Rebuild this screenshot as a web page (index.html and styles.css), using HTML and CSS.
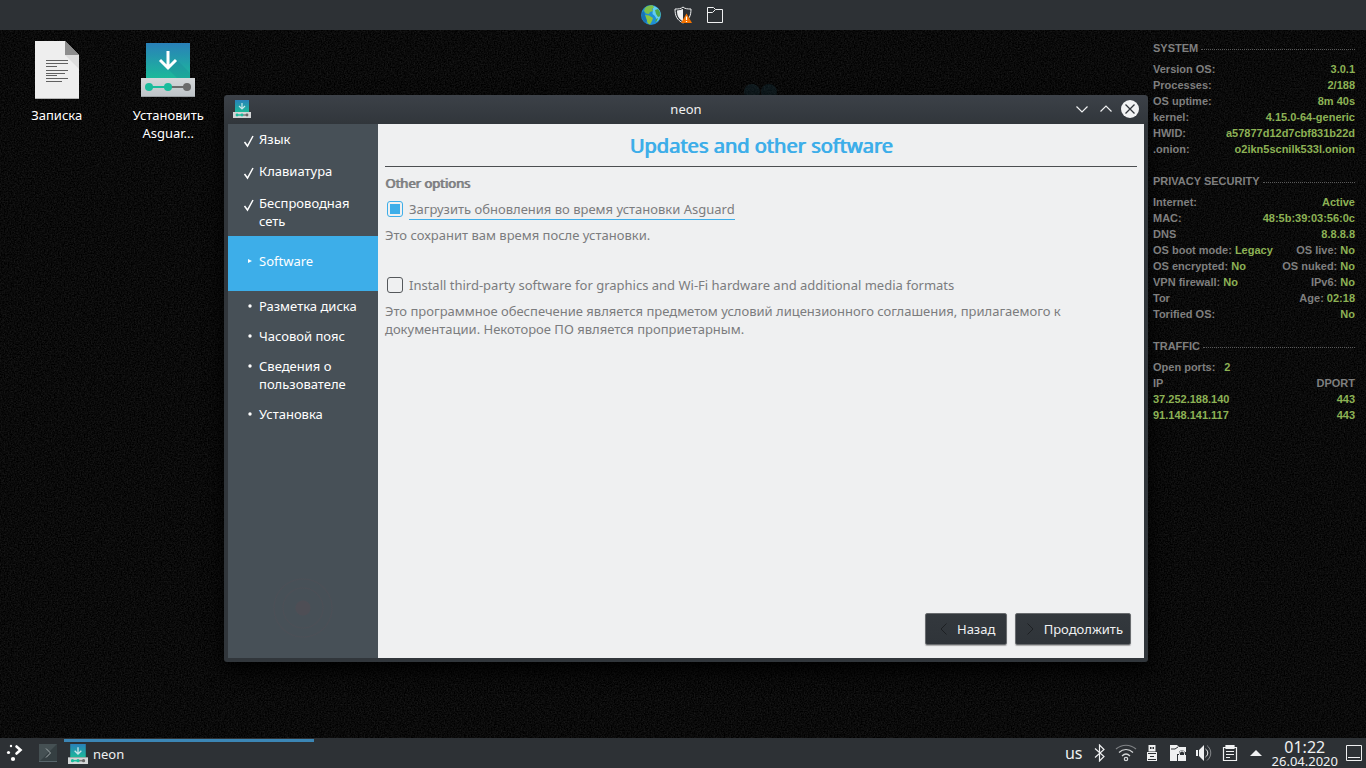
FILE: index.html
```html
<!DOCTYPE html>
<html lang="ru">
<head>
<meta charset="utf-8">
<meta name="viewport" content="width=device-width, initial-scale=1">
<title>neon</title>
<link rel="stylesheet" href="styles.css">
</head>
<body>
<svg class="wallpaper" aria-hidden="true">
  <defs>
    <filter id="grain" x="0" y="0" width="100%" height="100%" color-interpolation-filters="sRGB">
      <feTurbulence type="fractalNoise" baseFrequency="0.7" numOctaves="2" seed="4"/>
      <feColorMatrix type="matrix" values="0.16 0 0 0 -0.04  0.16 0 0 0 -0.04  0.16 0 0 0 -0.04  0 0 0 0 1"/>
    </filter>
    <linearGradient id="teal" x1="0" y1="0" x2="0" y2="1"><stop offset="0" stop-color="#2980b9"/><stop offset="1" stop-color="#1cb99a"/></linearGradient>
    <linearGradient id="metal" x1="0" y1="0" x2="0" y2="1"><stop offset="0" stop-color="#d5d8da"/><stop offset="1" stop-color="#bdc3c7"/></linearGradient>
    <symbol id="installer" viewBox="0 0 54 54">
      <path fill="url(#teal)" d="M5 0h44v35H5z"/>
      <path fill="#1a7d92" opacity=".25" d="M36 17l13 13v5H36l-9-9z"/>
      <path d="M27 8v17M19 17l8 8 8-8" fill="none" stroke="#fff" stroke-width="3"/>
      <path fill="url(#metal)" d="M0 35h54v19H0z"/>
      <path fill="#9a9fa2" d="M0 53h54v1H0z"/>
      <path d="M27 44h18" stroke="#6b6b6b" stroke-width="2"/>
      <path d="M8 44h19" stroke="#1abc9c" stroke-width="2"/>
      <circle cx="8" cy="44" r="4" fill="#1abc9c"/><circle cx="27" cy="44" r="4" fill="#1abc9c"/><circle cx="46" cy="44" r="4" fill="#6b6b6b"/>
    </symbol>
    <symbol id="installer-small" viewBox="0 0 18 18">
      <path fill="url(#teal)" d="M2 0h14v12H2z"/>
      <path d="M9 3v6M6 6l3 3 3-3" fill="none" stroke="#c9e5ea" stroke-width="1.2"/>
      <path fill="#d3d6d7" d="M0 12h18v6H0z"/>
      <path d="M9 15h6" stroke="#777" stroke-width="1.4"/>
      <path d="M3 15h6" stroke="#1abc9c" stroke-width="1.4"/>
      <circle cx="4" cy="15" r="1.4" fill="#1abc9c"/><circle cx="9" cy="15" r="1.4" fill="#1abc9c"/><circle cx="14" cy="15" r="1.4" fill="#666"/>
    </symbol>
  </defs>
  <rect width="100%" height="100%" filter="url(#grain)"/>
  <g fill="#1b3a46" opacity=".35"><circle cx="752" cy="92" r="8"/><circle cx="769" cy="92" r="8"/></g>
</svg>

<header class="top-panel">
  <button class="icon-button" aria-label="Браузер">
    <svg width="20" height="20" viewBox="0 0 20 20"><circle cx="10" cy="10" r="10" fill="#1f8fd6"/><path fill="#63cdf0" d="M12 1c5 1 8 5 7.500 9-.5 4-2 6-4 7 0-4-1-6-4-8z"/><path fill="#7fc04a" d="M4 3c2-2 5-3 8-2.500l1 2-2 1.500 1 2-3 1-1 2-3-.5L3 6z"/><path fill="#8cc63f" d="M4 10l4 .5 4 2.500-1 3-2 3.500c-2-.5-3-2-3-4z"/><path fill="#4ea84a" d="M14 5l3-1 2 3 .5 4-2.500 1-2-3zM15 14l2-1-1 3-2 1z"/><path fill="#14609f" opacity=".6" d="M.5 8L3 6l1 4 2 6-1 2C1.500 16 0 12 .5 8z"/></svg>
  </button>
  <button class="icon-button" aria-label="Безопасность">
    <svg width="20" height="20" viewBox="0 0 20 20"><path d="M10 2c-2 2-5 2-8 2 0 7 2 11 8 14 6-3 8-7 8-14-3 0-6 0-8-2z" fill="#2c3034" stroke="#eff0f1" stroke-width="1"/><path fill="#eff0f1" d="M10 4c-2 1-4 1-6 1.500 0 6 2 8.500 6 11z"/><path fill="#f67400" d="M13.500 8.500L19 18H8z"/><path d="M13.500 11.500v3.500M13.500 16v1" stroke="#fff" stroke-width="1.200"/></svg>
  </button>
  <button class="icon-button" aria-label="Файлы">
    <svg width="20" height="20" viewBox="0 0 20 20" fill="none" stroke="#eff0f1"><path d="M2.500 17.500v-15h6l2 2h7v13z"/><path d="M2.500 7.500h5l3-3" /></svg>
  </button>
</header>

<div class="desktop">
  <nav class="shortcuts" aria-label="Рабочий стол">
    <a class="shortcut" href="#note">
      <svg width="60" height="60" viewBox="0 0 60 60"><path fill="#eeeeee" d="M8 1h30l14 14v44H8z"/><path fill="#dddddd" d="M38 15h14v14z"/><path fill="#8d8d8d" d="M38 1l14 14H38z"/><path fill="#b5b5b5" d="M8 58h44v1H8z"/><path stroke="#606060" d="M19 20.500h22M19 23.500h22M19 26.500h11M19 30.500h22M19 33.500h19M19 35.500h11M19 38.500h22M19 41.500h16"/></svg>
      <span>Записка</span>
    </a>
    <a class="shortcut" href="#install">
      <svg width="60" height="60" viewBox="0 0 60 60"><use href="#installer" x="3" y="3" width="54" height="54"/></svg>
      <span>Установить Asguar...</span>
    </a>
  </nav>

  <main class="window">
    <div class="titlebar">
      <svg width="18" height="18"><use href="#installer-small"/></svg>
      <span class="title">neon</span>
      <div class="window-buttons">
        <button class="icon-button" aria-label="Свернуть"><svg width="18" height="18" viewBox="0 0 18 18" fill="none" stroke="#eff0f1" stroke-width="1.200"><path d="M3.500 6.500L9 12l5.500-5.500"/></svg></button>
        <button class="icon-button" aria-label="Развернуть"><svg width="18" height="18" viewBox="0 0 18 18" fill="none" stroke="#eff0f1" stroke-width="1.200"><path d="M3.500 11.500L9 6l5.500 5.500"/></svg></button>
        <button class="icon-button" aria-label="Закрыть"><svg width="18" height="18" viewBox="0 0 18 18"><circle cx="9" cy="9" r="9" fill="#f1f2f3"/><path d="M4.500 4.500l9 9M13.500 4.500l-9 9" stroke="#31363b" stroke-width="1.300"/></svg></button>
      </div>
    </div>
    <div class="window-body">
      <ol class="steps">
        <li class="step done"><svg class="mark" width="12" height="14" viewBox="0 0 12 14"><path d="M1.500 8l3 4L10 2" fill="none" stroke="#fff" stroke-width="1.500"/></svg>Язык</li>
        <li class="step done"><svg class="mark" width="12" height="14" viewBox="0 0 12 14"><path d="M1.500 8l3 4L10 2" fill="none" stroke="#fff" stroke-width="1.500"/></svg>Клавиатура</li>
        <li class="step done"><svg class="mark" width="12" height="14" viewBox="0 0 12 14"><path d="M1.500 8l3 4L10 2" fill="none" stroke="#fff" stroke-width="1.500"/></svg>Беспроводная сеть</li>
        <li class="step current" aria-current="step"><svg class="mark" width="12" height="14" viewBox="0 0 12 14"><path d="M5 5l4 2-4 2z" fill="#fff"/></svg>Software</li>
        <li class="step"><svg class="mark" width="12" height="14" viewBox="0 0 12 14"><circle cx="7" cy="7" r="1.700" fill="#fff"/></svg>Разметка диска</li>
        <li class="step"><svg class="mark" width="12" height="14" viewBox="0 0 12 14"><circle cx="7" cy="7" r="1.700" fill="#fff"/></svg>Часовой пояс</li>
        <li class="step"><svg class="mark" width="12" height="14" viewBox="0 0 12 14"><circle cx="7" cy="7" r="1.700" fill="#fff"/></svg>Сведения о пользователе</li>
        <li class="step"><svg class="mark" width="12" height="14" viewBox="0 0 12 14"><circle cx="7" cy="7" r="1.700" fill="#fff"/></svg>Установка</li>
      </ol>
      <form class="page">
        <h1>Updates and other software</h1>
        <h2>Other options</h2>
        <div class="option"><input type="checkbox" id="updates" checked><label class="focused" for="updates">Загрузить обновления во время установки Asguard</label></div>
        <p class="hint">Это сохранит вам время после установки.</p>
        <div class="option second"><input type="checkbox" id="third-party"><label for="third-party">Install third-party software for graphics and Wi-Fi hardware and additional media formats</label></div>
        <p class="hint">Это программное обеспечение является предметом условий лицензионного соглашения, прилагаемого к документации. Некоторое ПО является проприетарным.</p>
        <div class="actions">
          <button type="button" class="action"><svg width="16" height="16" viewBox="0 0 16 16" fill="none" stroke="#1d2023"><path d="M10.500 2.500L5 8l5.500 5.500"/></svg>Назад</button>
          <button type="button" class="action"><svg width="16" height="16" viewBox="0 0 16 16" fill="none" stroke="#1d2023"><path d="M4.500 2.500L10 8l-5.500 5.500"/></svg>Продолжить</button>
        </div>
      </form>
    </div>
  </main>

  <aside class="monitor">
    <section>
      <h2>SYSTEM</h2>
      <div class="row"><span>Version OS:</span><b>3.0.1</b></div>
      <div class="row"><span>Processes:</span><b>2/188</b></div>
      <div class="row"><span>OS uptime:</span><b>8m 40s</b></div>
      <div class="row"><span>kernel:</span><b>4.15.0-64-generic</b></div>
      <div class="row"><span>HWID:</span><b>a57877d12d7cbf831b22d</b></div>
      <div class="row"><span>.onion:</span><b>o2ikn5scnilk533l.onion</b></div>
    </section>
    <section>
      <h2>PRIVACY SECURITY</h2>
      <div class="row"><span>Internet:</span><b>Active</b></div>
      <div class="row"><span>MAC:</span><b>48:5b:39:03:56:0c</b></div>
      <div class="row"><span>DNS</span><b>8.8.8.8</b></div>
      <div class="row"><span>OS boot mode: <b>Legacy</b></span><span>OS live: <b>No</b></span></div>
      <div class="row"><span>OS encrypted: <b>No</b></span><span>OS nuked: <b>No</b></span></div>
      <div class="row"><span>VPN firewall: <b>No</b></span><span>IPv6: <b>No</b></span></div>
      <div class="row"><span>Tor</span><span>Age: <b>02:18</b></span></div>
      <div class="row"><span>Torified OS:</span><b>No</b></div>
    </section>
    <section>
      <h2>TRAFFIC</h2>
      <div class="row ports"><span>Open ports:</span><b>2</b></div>
      <div class="row"><span>IP</span><span>DPORT</span></div>
      <div class="row"><b>37.252.188.140</b><b>443</b></div>
      <div class="row"><b>91.148.141.117</b><b>443</b></div>
    </section>
  </aside>
</div>

<footer class="taskbar">
  <button class="icon-button launcher" aria-label="Меню"><svg width="18" height="18" viewBox="0 0 18 18" fill="#fff"><circle cx="5" cy="2" r="1.200"/><circle cx="2.500" cy="8.500" r="1.600"/><circle cx="7" cy="15" r="2.100"/><path d="M10.500 2.500L14.500 6l-4 3.500" fill="none" stroke="#fff" stroke-width="2.600" stroke-linecap="round"/></svg></button>
  <button class="icon-button" aria-label="Терминал"><svg width="18" height="18" viewBox="0 0 18 18"><path fill="#455053" d="M0 0h18v18H0z"/><path fill="#353f42" d="M0 18L18 0v18z"/><path d="M7 4.500l4.500 4.500L7 13.500" fill="none" stroke="#a5adaf"/><path d="M0 17.500h18" stroke="#59656b"/></svg></button>
  <button class="task"><svg width="20" height="20"><use href="#installer-small"/></svg>neon</button>
  <div class="tray">
    <button class="layout" aria-label="Раскладка">us</button>
    <button class="icon-button" aria-label="Bluetooth"><svg width="18" height="18" viewBox="0 0 18 18" fill="none" stroke="#eff0f1" stroke-width="1.200"><path d="M4 4.500l9 8-4.500 4.500V1L13 5.500l-9 8"/></svg></button>
    <button class="icon-button wifi" aria-label="Сеть"><svg width="22" height="18" viewBox="0 0 22 18" fill="none" stroke="#d5d8d9" stroke-width="1.200"><path opacity=".5" d="M1 5c6-5 14-5 20 0"/><path d="M4 8.500c4-4 10-4 14 0M7 12c2.500-2.500 5.500-2.500 8 0"/><circle cx="11" cy="15" r="1.700"/></svg></button>
    <button class="icon-button" aria-label="Устройства"><svg width="18" height="18" viewBox="0 0 18 18"><path d="M5.500 1h7v6.500h-7z" fill="#eff0f1"/><path d="M7 3h1.500v2H7zM9.500 3H11v2H9.500z" fill="#2d3135"/><path d="M4 8h10v9H4z" fill="#eff0f1"/><path d="M5 9.500h8M7 12.500h4M5 15.500h8" stroke="#2d3135"/></svg></button>
    <button class="icon-button" aria-label="Хранилище"><svg width="18" height="18" viewBox="0 0 18 18"><path fill="#eff0f1" d="M1 1h7l2 2h7v5h-1a3.500 3.500 0 0 0-6 0v2H8v7H1z"/><path d="M2 5h4l3-2" fill="none" stroke="#2d3135"/><path fill="#eff0f1" d="M9 11h8v6H9z"/><path d="M10.500 11V9.500a2.500 2.500 0 0 1 5 0V11" fill="none" stroke="#eff0f1"/></svg></button>
    <button class="icon-button" aria-label="Громкость"><svg width="18" height="18" viewBox="0 0 18 18"><path fill="#eff0f1" d="M1 6h2v6H1zM4 6l5-5v16l-5-5z"/><g fill="none" stroke="#eff0f1"><path d="M10.500 5c3 2 3 6 0 8"/><path opacity=".45" d="M12 1.500c5 4 5 11 0 15"/></g></svg></button>
    <button class="icon-button" aria-label="Буфер обмена"><svg width="18" height="18" viewBox="0 0 18 18" fill="none" stroke="#eff0f1" stroke-width="1.200"><path d="M2.500 3.500h13v13h-13z"/><path fill="#eff0f1" d="M5 1.500h8v3H5z"/><path d="M5 7.500h8M5 10.500h8M5 13.500h4"/></svg></button>
    <button class="icon-button" aria-label="Показать скрытые"><svg width="18" height="18" viewBox="0 0 18 18"><path fill="#eff0f1" d="M3 12l6-6 6 6z"/></svg></button>
    <div class="clock"><time class="time">01:22</time><time class="date">26.04.2020</time></div>
    <button class="icon-button" aria-label="Показать рабочий стол"><svg width="18" height="18" viewBox="0 0 18 18" fill="none" stroke="#eff0f1"><path d="M1.500 1.500h15v15h-15zM3 13.500h12"/></svg></button>
  </div>
</footer>
</body>
</html>
```
FILE: styles.css
```css
* { box-sizing: border-box; }

body {
  margin: 0;
  min-height: 100vh;
  display: flex;
  flex-direction: column;
  background: #0b0b0b;
  color: #eff0f1;
  font: 13px/18px "Noto Sans", sans-serif;
}

h1, h2, p, ol { margin: 0; padding: 0; }
svg { display: block; flex: none; }
button { font: inherit; color: inherit; border: 0; background: none; padding: 0; }

.wallpaper {
  position: absolute;
  inset: 0;
  width: 100%;
  height: 100%;
  z-index: -1;
}

.top-panel {
  height: 30px;
  flex: none;
  display: flex;
  justify-content: center;
  align-items: center;
  gap: 12px;
  background: #2d3135;
}

.desktop {
  flex: 1;
  display: grid;
  grid-template-columns: 224px 1fr 218px;
}

.shortcuts { display: flex; align-items: flex-start; padding: 10px 0 0 1px; }
.shortcut {
  width: 112px;
  padding: 0 16px;
  display: flex;
  flex-direction: column;
  align-items: center;
  gap: 6px;
  color: #fff;
  text-align: center;
  text-decoration: none;
  text-shadow: 0 1px 2px #000;
}

.window {
  margin: 65px 0 76px;
  display: flex;
  flex-direction: column;
  background: #31363b;
  border-radius: 4px 4px 3px 3px;
  padding: 0 4px 4px;
  box-shadow: 0 8px 20px #000;
}
.titlebar {
  height: 29px;
  padding: 0 5px 2px;
  margin: 0 -4px;
  display: grid;
  grid-template-columns: 1fr auto 1fr;
  align-items: center;
  background: linear-gradient(#3c4148, #31363b);
  border-radius: 4px 4px 0 0;
}
.titlebar > svg { margin-left: 4px; }
.window-buttons { display: flex; justify-content: flex-end; gap: 6px; padding-right: 4px; }

.window-body { flex: 1; display: flex; }

.steps {
  width: 150px;
  flex: none;
  list-style: none;
  background:
    radial-gradient(circle at 75px calc(100% - 50px),
      #4e4e55 7px, transparent 8px, transparent 19px, #4c4f56 20px, transparent 21px,
      transparent 28px, #4c4f56 29px, transparent 30px)
    #475057;
}
.step { display: flex; align-items: flex-start; padding: 6px 16px 6px 15px; gap: 4px; color: #fff; }
.step.done { padding-bottom: 8px; }
.step.done .mark { margin-top: 4px; }
.step.done:nth-child(3) { padding-bottom: 6px; }
.mark { margin-top: 2px; }
.step.current { padding-top: 16px; padding-bottom: 21px; background: #3daee9; }

.page {
  flex: 1;
  display: flex;
  flex-direction: column;
  padding: 0 7px 13px;
  background: #eff0f1;
  color: #7b7c7e;
}
.page h1,
.page h2 { font-weight: 400; text-shadow: 1px 0 currentColor; }
.page h1 {
  padding: 8px 0 7px;
  border-bottom: 1px solid #4b4e51;
  color: #3daee9;
  font-size: 20px;
  line-height: 27px;
  text-align: center;
}
.page h2 { margin-top: 7px; font-size: 13px; line-height: 18px; }
.option { display: flex; align-items: flex-start; gap: 6px; height: 20px; margin: 8px 0 6px 2px; }
.option.second { margin-top: 32px; }
.option label { border-bottom: 1px solid transparent; line-height: 19px; }
.option label.focused { border-color: #3daee9; }
.option input {
  appearance: none;
  width: 16px;
  height: 16px;
  margin: 1px 0 0;
  border: 1px solid #55585b;
  border-radius: 3px;
}
.option input:checked { border-color: #3daee9; background: #3daee9 content-box; padding: 2px; }

.actions { display: flex; justify-content: flex-end; gap: 8px; margin: auto 6px 0 0; }
.action {
  height: 32px;
  min-width: 82px;
  padding: 0 7px 1px;
  display: flex;
  align-items: center;
  justify-content: center;
  gap: 5px;
  border: 1px solid #686b6e;
  border-radius: 2px;
  background: linear-gradient(#33383d, #2f3439);
  color: #eff0f1;
  box-shadow: 0 1px 1px #aaa;
}

.monitor {
  padding: 10px 11px 0 5px;
  color: #7f7f7f;
  font: bold 11px/16px "Liberation Sans Narrow", "Liberation Sans", sans-serif;
}
.monitor section { margin-bottom: 16px; }
.monitor h2 { display: flex; align-items: center; gap: 3px; margin-bottom: 5px; font: inherit; }
.monitor h2::after { content: ""; flex: 1; margin-top: 3px; border-top: 1px dotted #5a5a5a; }
.monitor b { color: #8db255; }
.row { display: flex; justify-content: space-between; white-space: nowrap; }
.row.ports { justify-content: flex-start; gap: 9px; }

.taskbar {
  height: 30px;
  flex: none;
  display: flex;
  align-items: center;
  background: #2d3135;
}
.launcher { margin: 0 15px 0 6px; }
.task {
  width: 250px;
  height: 29px;
  margin: 1px 0 0 7px;
  padding: 0 4px;
  display: flex;
  align-items: center;
  gap: 5px;
  box-shadow: inset 0 3px #3b86b5;
}
.tray { margin-left: auto; padding-right: 3px; display: flex; align-items: center; gap: 8px; }
.wifi { margin: 0 -2px; }
.layout { font-size: 16px; }
.clock { margin: 0 -1px; display: flex; flex-direction: column; align-items: center; }
.time { font-size: 16px; line-height: 16px; }
.date { font-size: 13px; line-height: 13px; }
```
